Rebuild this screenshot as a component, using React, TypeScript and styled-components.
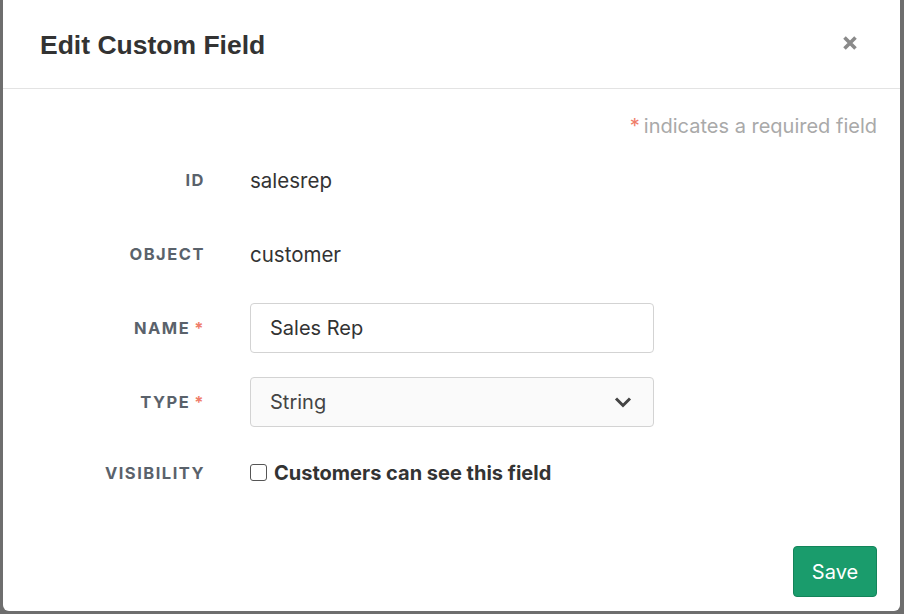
import styled, { createGlobalStyle } from "styled-components";

const GlobalStyle = createGlobalStyle`
  html, body {
    margin: 0;
    padding: 0;
    background: #6e6e6e;
    font-family: "Inter", "Liberation Sans", sans-serif;
  }
`;

const Backdrop = styled.div`
  width: 904px;
  height: 614px;
  padding: 0 4px 3px 3px;
  box-sizing: border-box;
  display: flex;
  align-items: flex-end;
`;

const Modal = styled.div`
  width: 100%;
  height: 620px;
  background: #fff;
  border-radius: 6px;
  display: flex;
  flex-direction: column;
`;

const Header = styled.div`
  height: 98px;
  padding: 0 37px;
  display: flex;
  align-items: center;
  justify-content: space-between;
  border-bottom: 1px solid #e3e3e3;
  box-sizing: border-box;
`;

const Title = styled.h2`
  margin: 12px 0 0;
  font-family: "Liberation Sans", sans-serif;
  font-size: 26.5px;
  font-weight: 700;
  color: #333;
`;

const Close = styled.button`
  border: none;
  background: none;
  padding: 0;
  margin: 6px 4px 0 0;
  width: 18px;
  height: 18px;
  display: grid;
  place-items: center;
  cursor: pointer;
`;

const Body = styled.div`
  flex: 1;
  padding: 25px 23px 0 37px;
  display: flex;
  flex-direction: column;
`;

const Note = styled.div`
  align-self: flex-end;
  font-size: 20px;
  color: #a9a9a9;
`;

const Star = styled.span`
  color: #ef7d6a;
  margin-left: 4px;
`;

const Form = styled.div`
  display: grid;
  grid-template-columns: 165px 404px;
  column-gap: 45px;
  margin-top: 5px;
`;

const Row = styled.div<{ height: number }>`
  display: contents;
  & > * {
    height: ${(p) => p.height}px;
  }
`;

const Label = styled.div`
  display: flex;
  align-items: center;
  justify-content: flex-end;
  font-size: 16.5px;
  font-weight: 700;
  letter-spacing: 1.5px;
  color: #5a626b;
  text-transform: uppercase;
`;

const Value = styled.div`
  display: flex;
  align-items: center;
  font-size: 20.5px;
  color: #333;
`;

const Input = styled.div`
  align-self: center;
  height: 50px !important;
  border: 1px solid #d3d3d3;
  border-radius: 4px;
  box-sizing: border-box;
  padding: 0 19px;
  display: flex;
  align-items: center;
  justify-content: space-between;
  font-size: 20px;
  color: #333;
  background: #fff;
`;

const Select = styled(Input)`
  background: #fafafa;
  color: #444;
  padding-right: 21px;
`;

const CheckLabel = styled.label`
  display: flex;
  align-items: center;
  gap: 7px;
  font-size: 20px;
  font-weight: 700;
  color: #333;
`;

const Box = styled.span`
  width: 15px;
  height: 15px;
  border: 1.5px solid #555;
  border-radius: 3px;
  margin-top: -2px;
`;

const Footer = styled.div`
  margin-top: auto;
  padding: 0 0 14px 0;
  display: flex;
  justify-content: flex-end;
`;

const SaveButton = styled.button`
  width: 84px;
  height: 51px;
  border: 1px solid #13845a;
  border-radius: 4px;
  background: #1a9c6c;
  color: #fff;
  font-family: "Inter", "Liberation Sans", sans-serif;
  font-size: 20px;
  cursor: pointer;
`;

export default function App() {
  return (
    <>
      <GlobalStyle />
      <Backdrop>
        <Modal>
          <Header>
            <Title>Edit Custom Field</Title>
            <Close aria-label="close">
              <svg width="16" height="16" viewBox="0 0 16 16">
                <path d="M2.5 2.5 L13.5 13.5 M13.5 2.5 L2.5 13.5" stroke="#8a8a8a" strokeWidth="3.6" strokeLinecap="butt" />
              </svg>
            </Close>
          </Header>
          <Body>
            <Note>
              <Star style={{ marginLeft: 0, marginRight: 4 }}>*</Star>indicates a required field
            </Note>
            <Form>
              <Row height={74}>
                <Label>ID</Label>
                <Value>salesrep</Value>
              </Row>
              <Row height={74}>
                <Label>Object</Label>
                <Value>customer</Value>
              </Row>
              <Row height={74}>
                <Label>Name<Star>*</Star></Label>
                <Input>Sales Rep</Input>
              </Row>
              <Row height={74}>
                <Label>Type<Star>*</Star></Label>
                <Select>
                  String
                  <svg width="18" height="12" viewBox="0 0 18 12">
                    <path d="M2 2.5 L9 9.5 L16 2.5" fill="none" stroke="#444" strokeWidth="3" />
                  </svg>
                </Select>
              </Row>
              <Row height={68}>
                <Label>Visibility</Label>
                <CheckLabel>
                  <Box />
                  Customers can see this field
                </CheckLabel>
              </Row>
            </Form>
            <Footer>
              <SaveButton>Save</SaveButton>
            </Footer>
          </Body>
        </Modal>
      </Backdrop>
    </>
  );
}
